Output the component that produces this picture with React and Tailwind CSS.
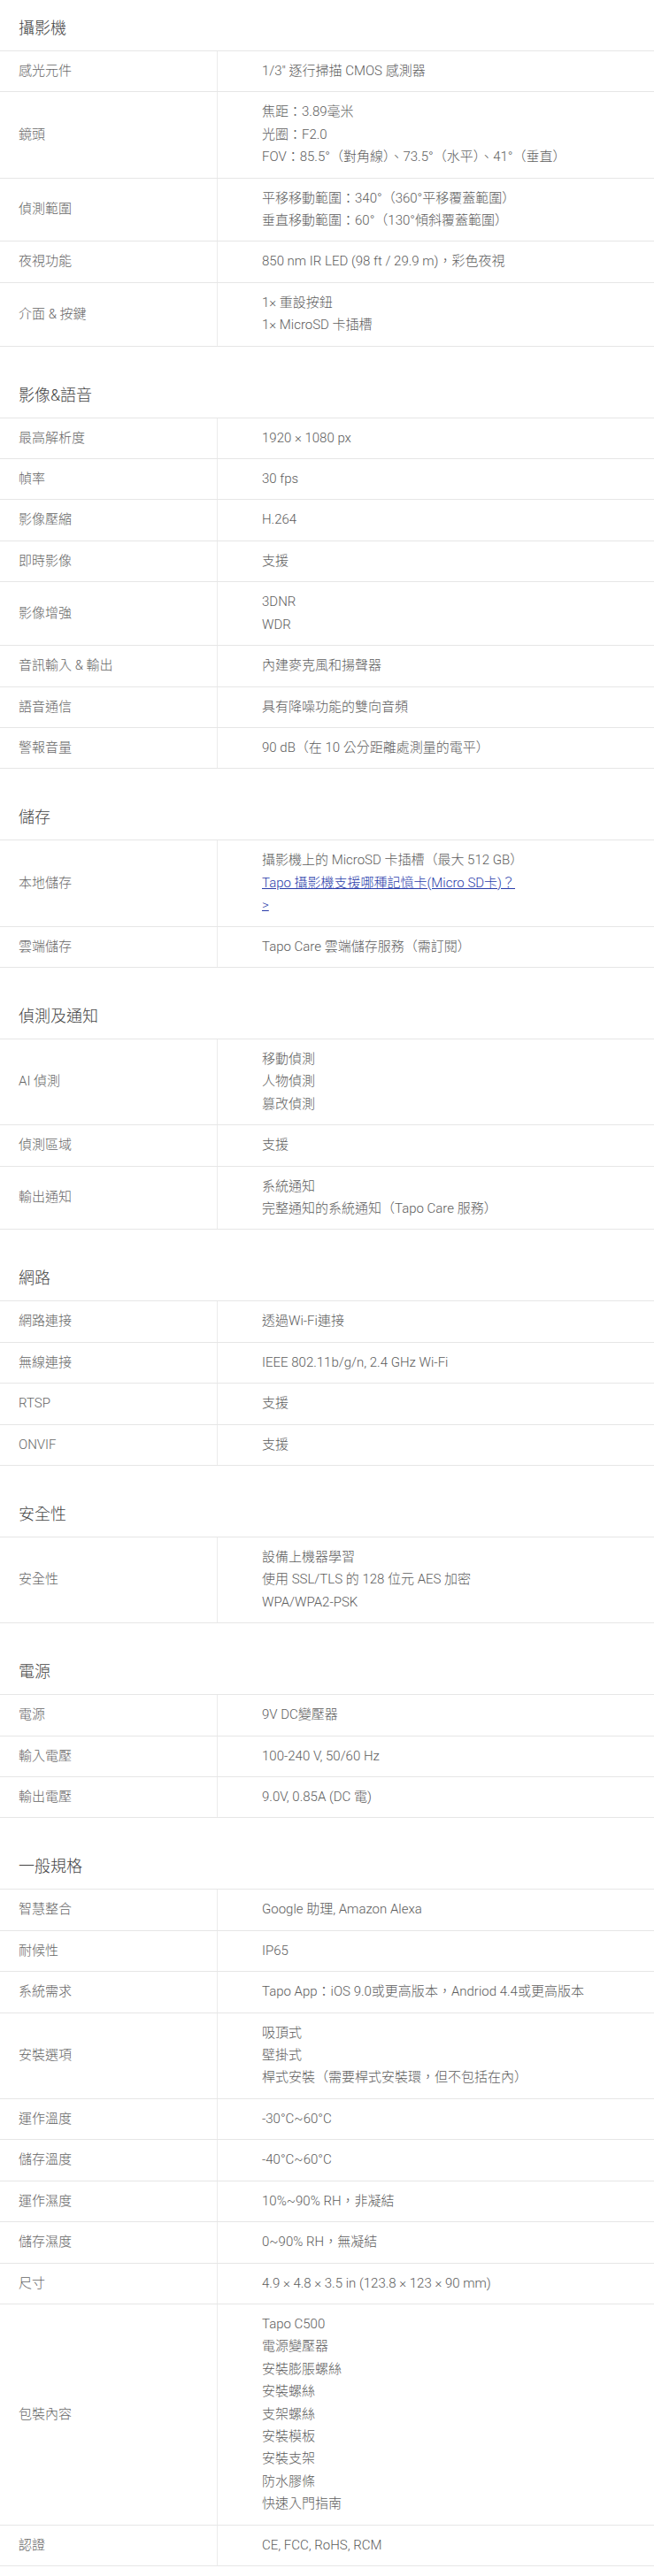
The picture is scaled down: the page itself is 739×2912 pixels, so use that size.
import React from 'react';

// =============================================
// SPEC DATA
// =============================================
const sections = [
  {
    title: '攝影機',
    rows: [
      ['感光元件', ['1/3" 逐行掃描 CMOS 感測器']],
      ['鏡頭', ['焦距：3.89毫米', '光圈：F2.0', 'FOV：85.5°（對角線）、73.5°（水平）、41°（垂直）']],
      ['偵測範圍', ['平移移動範圍：340°（360°平移覆蓋範圍）', '垂直移動範圍：60°（130°傾斜覆蓋範圍）']],
      ['夜視功能', ['850 nm IR LED (98 ft / 29.9 m)，彩色夜視']],
      ['介面 & 按鍵', ['1× 重設按鈕', '1× MicroSD 卡插槽']],
    ],
  },
  {
    title: '影像&語音',
    rows: [
      ['最高解析度', ['1920 × 1080 px']],
      ['幀率', ['30 fps']],
      ['影像壓縮', ['H.264']],
      ['即時影像', ['支援']],
      ['影像增強', ['3DNR', 'WDR']],
      ['音訊輸入 & 輸出', ['內建麥克風和揚聲器']],
      ['語音通信', ['具有降噪功能的雙向音頻']],
      ['警報音量', ['90 dB（在 10 公分距離處測量的電平）']],
    ],
  },
  {
    title: '儲存',
    rows: [
      ['本地儲存', ['攝影機上的 MicroSD 卡插槽（最大 512 GB）'], true],
      ['雲端儲存', ['Tapo Care 雲端儲存服務（需訂閱）']],
    ],
  },
  {
    title: '偵測及通知',
    rows: [
      ['AI 偵測', ['移動偵測', '人物偵測', '篡改偵測']],
      ['偵測區域', ['支援']],
      ['輸出通知', ['系統通知', '完整通知的系統通知（Tapo Care 服務）']],
    ],
  },
  {
    title: '網路',
    rows: [
      ['網路連接', ['透過Wi-Fi連接']],
      ['無線連接', ['IEEE 802.11b/g/n, 2.4 GHz Wi-Fi']],
      ['RTSP', ['支援']],
      ['ONVIF', ['支援']],
    ],
  },
  {
    title: '安全性',
    rows: [
      ['安全性', ['設備上機器學習', '使用 SSL/TLS 的 128 位元 AES 加密', 'WPA/WPA2-PSK']],
    ],
  },
  {
    title: '電源',
    rows: [
      ['電源', ['9V DC變壓器']],
      ['輸入電壓', ['100-240 V, 50/60 Hz']],
      ['輸出電壓', ['9.0V, 0.85A (DC 電)']],
    ],
  },
  {
    title: '一般規格',
    rows: [
      ['智慧整合', ['Google 助理, Amazon Alexa']],
      ['耐候性', ['IP65']],
      ['系統需求', ['Tapo App：iOS 9.0或更高版本，Andriod 4.4或更高版本']],
      ['安裝選項', ['吸頂式', '壁掛式', '桿式安裝（需要桿式安裝環，但不包括在內）']],
      ['運作溫度', ['-30°C~60°C']],
      ['儲存溫度', ['-40°C~60°C']],
      ['運作濕度', ['10%~90% RH，非凝結']],
      ['儲存濕度', ['0~90% RH，無凝結']],
      ['尺寸', ['4.9 × 4.8 × 3.5 in (123.8 × 123 × 90 mm)']],
      ['包裝內容', ['Tapo C500', '電源變壓器', '安裝膨脹螺絲', '安裝螺絲', '支架螺絲', '安裝模板', '安裝支架', '防水膠條', '快速入門指南']],
      ['認證', ['CE, FCC, RoHS, RCM']],
    ],
  },
];

const font = "font-['Roboto','Noto_Sans_CJK_TC',sans-serif]";

function SpecRow({ label, lines, withLink }) {
  return (
    <div className="flex border-b border-[#e6e6e6]">
      <div className="w-[246px] shrink-0 flex items-center pl-[21px] py-[10px] border-r border-[#ececec] text-[15px] leading-[25.4px] text-[#666]">
        {label}
      </div>
      <div className="flex-1 pl-[50px] pr-3 py-[10px] text-[15px] leading-[25.4px] text-[#5c5c5c]">
        {lines.map((l, i) => (
          <div key={i}>{l}</div>
        ))}
        {withLink && (
          <>
            <div>
              <a href="#" className="text-[#2a3caa] underline">Tapo 攝影機支援哪種記憶卡(Micro SD卡)？</a>
            </div>
            <div>
              <a href="#" className="text-[#2a3caa] underline">&gt;</a>
            </div>
          </>
        )}
      </div>
    </div>
  );
}

export default function App() {
  return (
    <div className={`w-[739px] bg-white pb-[11px] font-light ${font}`}>
      {sections.map((sec, si) => (
        <section key={sec.title} className={si === 0 ? '' : 'mt-[23px]'}>
          <h2 className="pl-[21px] pt-[20px] pb-[13px] text-[18px] leading-[24px] font-light text-[#444]">
            {sec.title}
          </h2>
          <div className="border-t border-[#e6e6e6]">
            {sec.rows.map(([label, lines, withLink]) => (
              <SpecRow key={label + lines[0]} label={label} lines={lines} withLink={withLink} />
            ))}
          </div>
        </section>
      ))}
    </div>
  );
}
